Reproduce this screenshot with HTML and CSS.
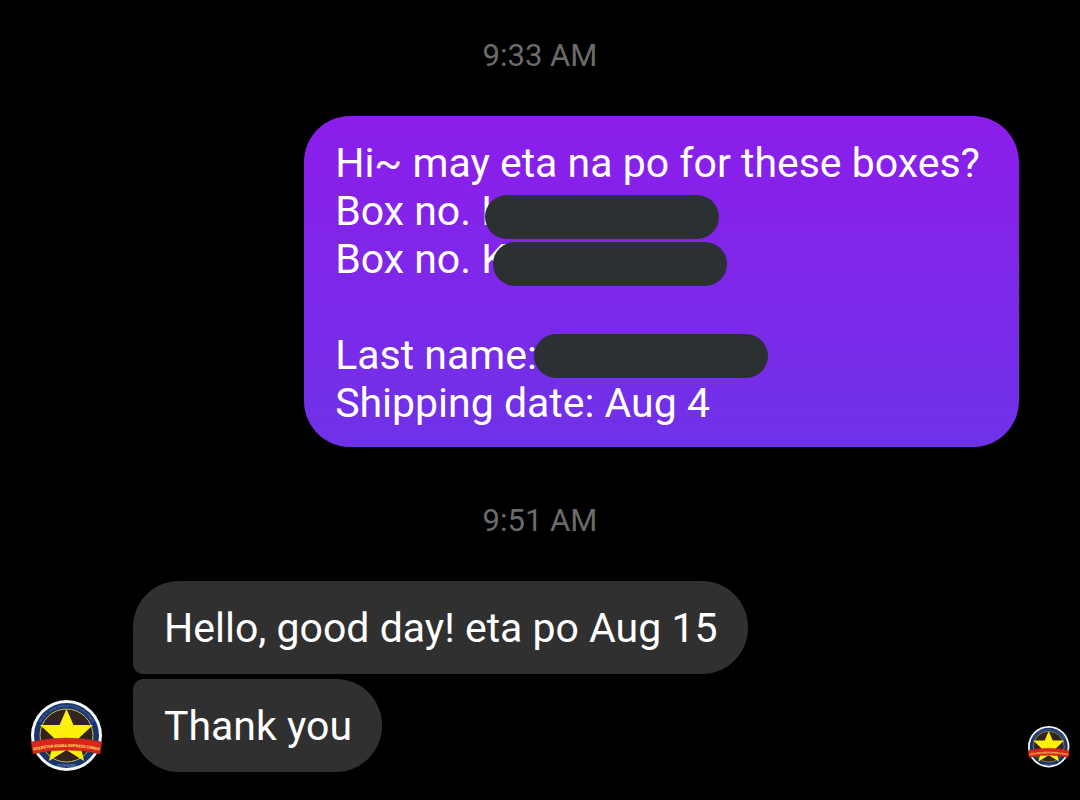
FILE: index.html
```html
<!DOCTYPE html>
<html lang="en">
<head>
<meta charset="utf-8">
<meta name="viewport" content="width=device-width, initial-scale=1">
<title>Conversation</title>
<link rel="stylesheet" href="styles.css">
</head>
<body>
<svg class="defs" aria-hidden="true">
  <symbol id="logo" viewBox="0 0 72 72">
    <circle cx="35.5" cy="35.5" r="35.5" fill="#f4f6f8"/>
    <circle cx="35.5" cy="35.5" r="32.5" fill="#17346e"/>
    <circle cx="35.5" cy="35.5" r="26.5" fill="#33231f" stroke="#c9bd3c" stroke-width="1"/>
    <path id="ring" d="M6.500 36A29 29 0 0 1 64.500 36" fill="none"/>
    <text class="logo-ring"><textPath href="#ring" startOffset="50%" text-anchor="middle">DOOR TO DOOR SERVICE TO THE PHILIPPINES</textPath></text>
    <path d="M35.500 9L42.500 25H62L48 38L53 61L35.500 50L18 61L23 38L9 25H28.500Z" fill="#fdf00d"/>
    <path d="M0 42Q35.500 34 71 42L69 54Q35.500 46 2 54Z" fill="#d9251c" stroke="#8f2a20" stroke-width=".5"/>
    <path id="band" d="M0 51Q35.500 43 71 51" fill="none"/>
    <text class="logo-band"><textPath href="#band" startOffset="50%" text-anchor="middle">GOLDSTAR KOREA EXPRESS CARGO</textPath></text>
    <text class="logo-foot" x="35.5" y="67" text-anchor="middle">SOUTH KOREA</text>
  </symbol>
</svg>
<main class="chat">
  <time class="stamp" datetime="09:33">9:33 AM</time>
  <section class="sent">
    <div class="bubble bubble-sent">
      <p class="line">Hi~ may eta na po for these boxes?</p>
      <p class="line">Box no. K<span class="redact redact-first"></span></p>
      <p class="line">Box no. K<span class="redact redact-second"></span></p>
      <p class="line"></p>
      <p class="line">Last name:<span class="redact redact-name"></span></p>
      <p class="line">Shipping date: Aug 4</p>
    </div>
  </section>
  <time class="stamp" datetime="09:51">9:51 AM</time>
  <section class="received">
    <svg class="avatar" role="img" aria-label="Goldstar Korea Express Cargo"><use href="#logo"/></svg>
    <div class="stack">
      <p class="bubble bubble-top">Hello, good day! eta po Aug 15</p>
      <p class="bubble bubble-bottom">Thank you</p>
    </div>
    <svg class="seen" role="img" aria-label="Seen"><use href="#logo"/></svg>
  </section>
</main>
</body>
</html>
```
FILE: styles.css
```css
* { box-sizing: border-box; }
body {
  margin: 0;
  background: #000;
  color: #fff;
  font-family: Roboto, "Liberation Sans", sans-serif;
  font-size: 41px;
  line-height: 48px;
}
p { margin: 0; }
.defs { position: absolute; width: 0; height: 0; }
.chat { display: flex; flex-direction: column; padding: 36px 10px 28px 31px; }
.stamp {
  align-self: center;
  margin-right: 21px;
  color: #6b6b6b;
  font-size: 31px;
  line-height: 40px;
}
.sent { display: flex; justify-content: flex-end; padding: 40px 51px 54px 0; }
.bubble { padding: 23px 30px 22px 31px; border-radius: 46px; background: #303030; }
.bubble-sent {
  padding: 23px 39px 20px 31px;
  background: linear-gradient(#8c1deb, #6f32e8);
}
.line { position: relative; min-height: 48px; }
.redact {
  position: absolute;
  width: 234px;
  height: 44px;
  border-radius: 22px;
  background: #2b3033;
}
.redact-first { left: 150px; top: 8px; }
.redact-second { left: 158px; top: 7px; }
.redact-name { left: 199px; top: 3px; }
.received { display: flex; align-items: flex-end; padding-top: 40px; }
.stack { display: flex; flex-direction: column; align-items: flex-start; gap: 5px; margin-left: 30px; }
.bubble-top { border-bottom-left-radius: 10px; }
.bubble-bottom { border-top-left-radius: 10px; }
.avatar { flex: none; width: 72px; height: 72px; }
.seen { flex: none; width: 42px; height: 42px; margin-left: auto; margin-bottom: 4px; }
.logo-ring, .logo-band, .logo-foot { font-family: Roboto, sans-serif; }
.logo-ring { font-size: 3px; fill: #7590b5; }
.logo-band { font-size: 4px; font-weight: 700; fill: #ffe96b; }
.logo-foot { font-size: 3px; fill: #8fa6c4; }
```
